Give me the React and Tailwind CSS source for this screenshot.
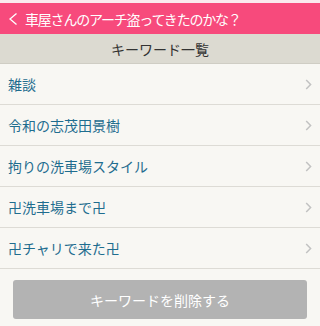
const keywords = [
  '雑談',
  '令和の志茂田景樹',
  '拘りの洗車場スタイル',
  '卍洗車場まで卍',
  '卍チャリで来た卍',
];

export default function App() {
  return (
    <div
      className="w-[320px] h-[326px] bg-[#f8f7f3] overflow-hidden"
      style={{ fontFamily: '"Noto Sans CJK JP", "Noto Sans", sans-serif' }}
    >
      <div className="h-[3px] bg-[#fbe9ee]" />
      <div className="h-[31px] bg-[#f74a7c] flex items-center pl-2 text-white text-[14px] leading-none">
        <svg width="10" height="14" viewBox="0 0 10 14" fill="none" className="mr-[7px]">
          <path d="M8.5 1.5 L2 7 L8.5 12.5" stroke="#ffffff" strokeWidth="1.3" />
        </svg>
        <span className="tracking-[-1.2px]">車屋さんのアーチ盗ってきたのかな？</span>
      </div>
      <div className="h-[30px] bg-[#dcdad1] border-b border-[#cfcdc4] flex items-center justify-center text-[14px] text-[#333333] leading-none">
        キーワード一覧
      </div>
      <ul>
        {keywords.map((k) => (
          <li
            key={k}
            className="h-[41px] border-b border-[#dddbd5] flex items-center justify-between pl-2 pr-[8px] text-[14px] text-[#1f6d8f] leading-none"
          >
            <span>{k}</span>
            <svg width="7" height="11" viewBox="0 0 7 11" fill="none">
              <path d="M1.2 1 L5.6 5.5 L1.2 10" stroke="#c2c2c2" strokeWidth="1.5" />
            </svg>
          </li>
        ))}
      </ul>
      <div className="px-[13px] pt-[11px]">
        <button className="w-full h-[39px] rounded-[3px] bg-[#b3b3b3] text-white text-[14px] leading-none">
          キーワードを削除する
        </button>
      </div>
    </div>
  );
}
